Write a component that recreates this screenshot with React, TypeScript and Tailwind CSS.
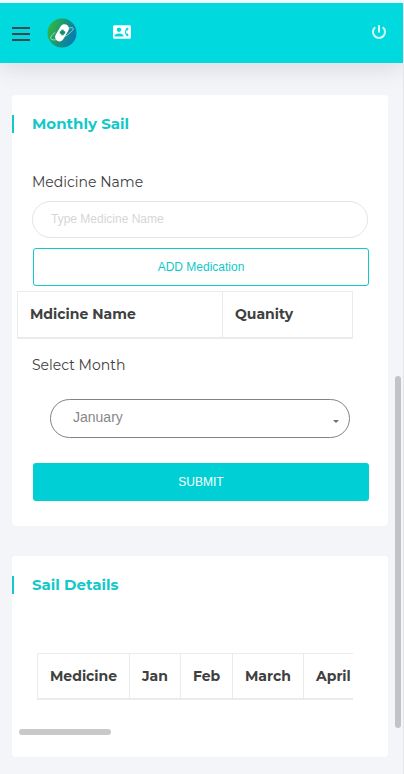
import { useState } from "react";
import type { ReactNode } from "react";
import { MdContactPhone } from "react-icons/md";

const months = [
  "January", "February", "March", "April", "May", "June",
  "July", "August", "September", "October", "November", "December",
];

const detailColumns = [
  { label: "Medicine", width: "w-[92px]" },
  { label: "Jan", width: "w-[51px]" },
  { label: "Feb", width: "w-[52px]" },
  { label: "March", width: "w-[71px]" },
  { label: "April", width: "w-[64px]" },
];

function Logo() {
  return (
    <svg viewBox="0 0 30 30" className="size-[30px]" aria-hidden="true">
      <defs>
        <linearGradient id="logo-fill" x1="0" y1="0.3" x2="1" y2="0.7">
          <stop offset="0" stopColor="#36b83c" />
          <stop offset="0.5" stopColor="#16957a" />
          <stop offset="1" stopColor="#0875bd" />
        </linearGradient>
      </defs>
      <circle cx="15" cy="15" r="14.5" fill="url(#logo-fill)" />
      <path
        d="M8 14.5C4.5 17 2.8 19.7 4 21c2 2 9.300.5 15-3.200C24 14.500 27 11.500 26 10.200c-.6-.8-2.200-.6-4-.1"
        fill="none"
        stroke="#a9e3dc"
        strokeWidth="0.8"
        strokeLinecap="round"
      />
      <rect x="10.600" y="5.500" width="8.800" height="18.600" rx="4.400" fill="#fff" transform="rotate(31 15 14.800)" />
      <path d="M14.300 11.800h2.400v1.500h1.500v2.400h-1.500v1.500h-2.400v-1.500h-1.500v-2.400h1.500z" fill="#128c70" />
    </svg>
  );
}

function PowerIcon() {
  return (
    <svg viewBox="0 0 18 18" className="size-[18px]" fill="none" stroke="currentColor" strokeWidth="2" aria-hidden="true">
      <path d="M9 2v7.500" />
      <path d="M5.200 4.300a6 6 0 1 0 7.600 0" />
    </svg>
  );
}

function Header() {
  return (
    <header className="mr-px flex h-15 items-center bg-[#00d9dd] px-3 shadow-[0_4px_24px_rgba(60,65,80,0.16)]">
      <button type="button" aria-label="Open menu" className="flex w-[18px] flex-col gap-1 pt-0.5">
        <span className="h-0.5 bg-[#37474f]" />
        <span className="h-0.5 bg-[#37474f]" />
        <span className="h-0.5 bg-[#37474f]" />
      </button>
      <a href="#home" aria-label="Home" className="ml-[17px]">
        <Logo />
      </a>
      <a href="#contact" aria-label="Contact" className="ml-9 pb-0.5 text-white">
        <MdContactPhone size={18} />
      </a>
      <button type="button" aria-label="Log out" className="mr-[3px] ml-auto pb-0.5 text-[#d8fbfb]">
        <PowerIcon />
      </button>
    </header>
  );
}

function Card({ title, children }: { title: string; children: ReactNode }) {
  return (
    <section className="rounded-sm bg-white pt-5">
      <h2 className="border-l-2 border-[#12c8c8] pl-[18px] text-[15px]/[18px] font-bold text-[#12c8c8]">
        {title}
      </h2>
      {children}
    </section>
  );
}

const cell = "border border-b-2 border-[#e9ebec] px-3 text-left font-bold";

export default function App() {
  const [medicine, setMedicine] = useState("");
  const [month, setMonth] = useState("January");

  return (
    <div className="relative min-h-screen overflow-hidden border-t-3 border-[#eefafb] bg-[#f4f5f9] pb-[17px] font-['Montserrat','Inter',sans-serif] text-[#404040]">
      <Header />
      <main className="mt-8 mr-4 ml-3 flex flex-col gap-[30px]">
        <Card title="Monthly Sail">
          <form className="pb-[25px]" onSubmit={(e) => e.preventDefault()}>
            <div className="mt-[38px] px-5">
              <label htmlFor="medicine" className="block text-sm/[22px]">
                Medicine Name
              </label>
              <input
                id="medicine"
                type="text"
                value={medicine}
                onChange={(e) => setMedicine(e.target.value)}
                placeholder="Type Medicine Name"
                className="mt-2 block h-[37px] w-full rounded-full border border-[#e2e4e5] px-[18px] pb-0.5 font-['Liberation_Sans',Arial,sans-serif] text-xs outline-none placeholder:text-[#d6d6d6]"
              />
            </div>
            <div className="mt-2.5 mr-[19px] ml-[21px]">
              <button
                type="button"
                className="block h-[38px] w-full rounded-[3px] border border-[#12c8c8] font-['Liberation_Sans',Arial,sans-serif] text-xs text-[#12c8c8]"
              >
                ADD Medication
              </button>
            </div>
            <div className="mt-[5px] mr-[35px] ml-[5px]">
              <table className="w-full table-fixed border-collapse text-sm">
                <thead>
                  <tr className="h-[46px]">
                    <th scope="col" className={`${cell} w-[205px]`}>Mdicine Name</th>
                    <th scope="col" className={cell}>Quanity</th>
                  </tr>
                </thead>
              </table>
            </div>
            <div className="mt-[15px] px-5">
              <label htmlFor="month" className="block text-sm/[22px]">
                Select Month
              </label>
            </div>
            <div className="relative mx-[38px] mt-[23px]">
              <select
                id="month"
                value={month}
                onChange={(e) => setMonth(e.target.value)}
                className="block h-[39px] w-full appearance-none rounded-full border border-[#808386] bg-white px-[22px] pb-0.5 font-['Liberation_Sans',Arial,sans-serif] text-sm text-[#85888b] outline-none"
              >
                {months.map((name) => (
                  <option key={name}>{name}</option>
                ))}
              </select>
              <span className="pointer-events-none absolute top-[21px] right-[11px] border-x-3 border-t-3 border-x-transparent border-t-[#6d7073]" />
            </div>
            <div className="mt-[25px] mr-[19px] ml-[21px]">
              <button
                type="submit"
                className="block h-[38px] w-full rounded-[3px] bg-[#00cfd5] font-['Liberation_Sans',Arial,sans-serif] text-xs text-white"
              >
                SUBMIT
              </button>
            </div>
          </form>
        </Card>

        <Card title="Sail Details">
          <div className="mt-[59px] mr-[35px] ml-[25px] overflow-hidden">
            <table className="w-[330px] table-fixed border-collapse text-sm">
              <thead>
                <tr className="h-[46px]">
                  {detailColumns.map((column) => (
                    <th key={column.label} scope="col" className={`${cell} ${column.width}`}>
                      {column.label}
                    </th>
                  ))}
                </tr>
              </thead>
            </table>
          </div>
          <div className="mt-[29px] ml-[7px] pb-[22px]">
            <div className="h-1.5 w-[92px] rounded-full bg-[#c9c9c9]" />
          </div>
        </Card>
      </main>
      <div className="absolute top-[373px] right-[3px] h-[352px] w-1.5 rounded-full bg-[#c2c3c6]" />
      <div className="absolute top-15 right-0 bottom-0 w-px bg-[#e4e5e8]" />
    </div>
  );
}
